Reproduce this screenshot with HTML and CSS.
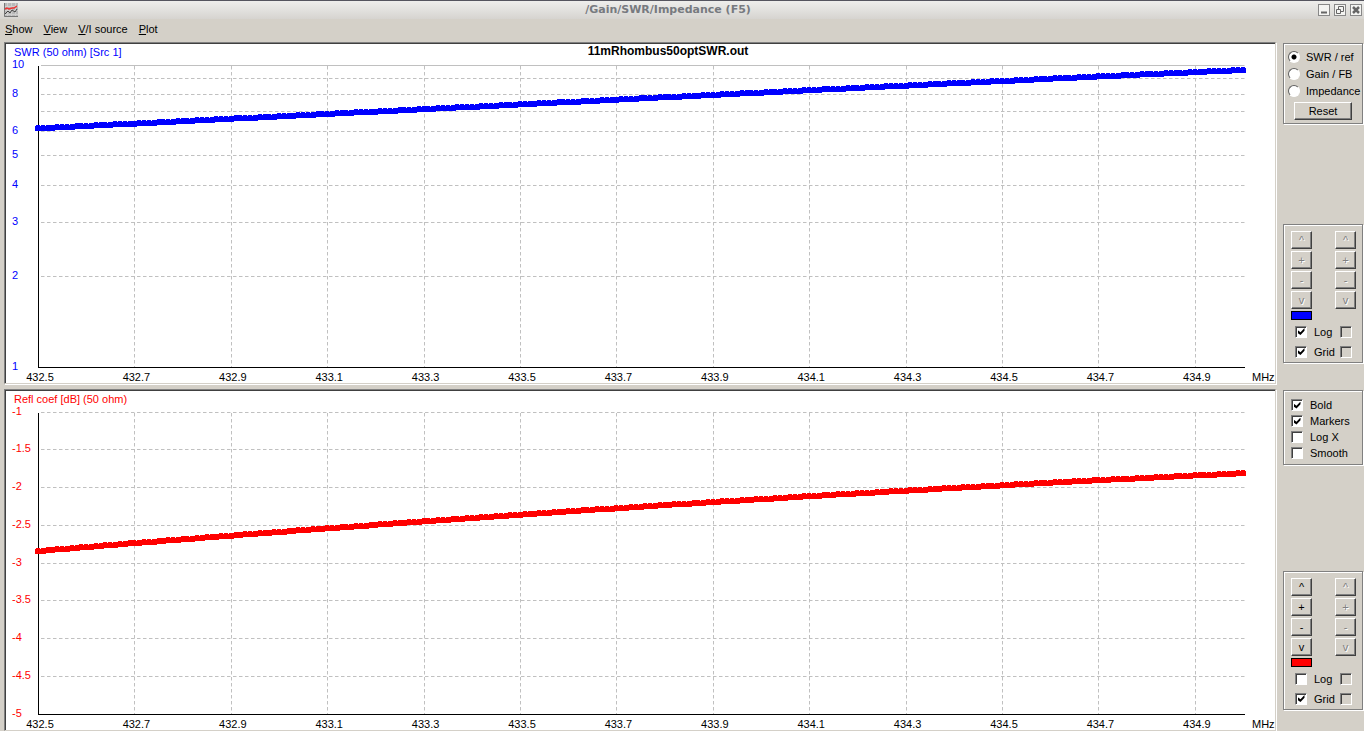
FILE: index.html
```html
<!DOCTYPE html>
<html lang="en">
<head>
<meta charset="utf-8">
<title>/Gain/SWR/Impedance (F5)</title>
<link rel="stylesheet" href="styles.css">
</head>
<body>
<header class="titlebar">
  <svg class="app-icon" width="14" height="14" viewBox="0 0 14 14" aria-hidden="true">
    <rect width="14" height="14" fill="#b9b9b9"/>
    <path d="M0 3.5h14M0 7.5h14M0 11.5h14M3.5 0v14M7.5 0v14M11.5 0v14" stroke="#cfcfcf"/>
    <path d="M.5 0v13.5H14" fill="none" stroke="#777"/>
    <path d="M1 6l2-1 2 1 3-1 2 0 3-2" fill="none" stroke="#e33" stroke-width="1.5"/>
    <path d="M1 11l3-3 2 2 2-3 3 2 2-3" fill="none" stroke="#444"/>
  </svg>
  <h1 class="window-title">/Gain/SWR/Impedance (F5)</h1>
  <div class="window-buttons">
    <button class="window-button" aria-label="Minimize"><svg width="10" height="10" viewBox="0 0 10 10"><path d="M2 7.5h6" stroke="#666" stroke-width="2"/></svg></button>
    <button class="window-button" aria-label="Restore"><svg width="10" height="10" viewBox="0 0 10 10" fill="none" stroke="#666"><path d="M3.500 4V1.500h5v5H6M1.500 4.500h4v4h-4z"/></svg></button>
    <button class="window-button" aria-label="Close"><svg width="10" height="10" viewBox="0 0 10 10"><path d="M2 2l6 6M8 2l-6 6" stroke="#666" stroke-width="2.500"/></svg></button>
  </div>
</header>
<nav class="menubar">
  <button class="menu"><u>S</u>how</button>
  <button class="menu"><u>V</u>iew</button>
  <button class="menu"><u>V</u>/I source</button>
  <button class="menu"><u>P</u>lot</button>
</nav>
<main class="workspace">
  <section class="row">
    <div class="chart-frame"><svg class="chart" id="swr" viewBox="0 0 1269 339" role="img" aria-label="SWR"></svg></div>
    <aside class="side">
      <div class="group modes">
        <label class="option"><input class="radio" type="radio" name="mode" checked>SWR / ref</label>
        <label class="option"><input class="radio" type="radio" name="mode">Gain / FB</label>
        <label class="option"><input class="radio" type="radio" name="mode">Impedance</label>
        <button class="button reset">Reset</button>
      </div>
      <div class="group scale">
        <div class="steppers">
          <div class="stepper">
            <button class="button step" disabled>^</button><button class="button step" disabled>+</button><button class="button step" disabled>-</button><button class="button step" disabled>v</button>
            <span class="swatch blue"></span>
          </div>
          <div class="stepper">
            <button class="button step" disabled>^</button><button class="button step" disabled>+</button><button class="button step" disabled>-</button><button class="button step" disabled>v</button>
          </div>
        </div>
        <div class="toggle"><label class="option"><input class="check" type="checkbox" checked>Log</label><input class="check" type="checkbox" aria-label="Log, right axis" disabled></div>
        <div class="toggle"><label class="option"><input class="check" type="checkbox" checked>Grid</label><input class="check" type="checkbox" aria-label="Grid, right axis" disabled></div>
      </div>
    </aside>
  </section>
  <section class="row">
    <div class="chart-frame"><svg class="chart" id="refl" viewBox="0 0 1269 339" role="img" aria-label="Reflection coefficient"></svg></div>
    <aside class="side">
      <div class="group display">
        <label class="option"><input class="check" type="checkbox" checked>Bold</label>
        <label class="option"><input class="check" type="checkbox" checked>Markers</label>
        <label class="option"><input class="check" type="checkbox">Log X</label>
        <label class="option"><input class="check" type="checkbox">Smooth</label>
      </div>
      <div class="group scale">
        <div class="steppers">
          <div class="stepper">
            <button class="button step">^</button><button class="button step">+</button><button class="button step">-</button><button class="button step">v</button>
            <span class="swatch red"></span>
          </div>
          <div class="stepper">
            <button class="button step" disabled>^</button><button class="button step" disabled>+</button><button class="button step" disabled>-</button><button class="button step" disabled>v</button>
          </div>
        </div>
        <div class="toggle"><label class="option"><input class="check" type="checkbox">Log</label><input class="check" type="checkbox" aria-label="Log, right axis" disabled></div>
        <div class="toggle"><label class="option"><input class="check" type="checkbox" checked>Grid</label><input class="check" type="checkbox" aria-label="Grid, right axis" disabled></div>
      </div>
    </aside>
  </section>
</main>
<script src="plot.js"></script>
</body>
</html>
```
FILE: styles.css
```css
* { box-sizing: border-box; }
body {
  margin: 0;
  min-height: 100vh;
  overflow: hidden;
  background: #d4d0c8;
  color: #000;
  font: 11px/16px "Liberation Sans", Arial, sans-serif;
}
button, input { margin: 0; padding: 0; font: inherit; color: inherit; }
.titlebar {
  display: flex;
  align-items: center;
  height: 19px;
  padding: 0 2px 0 4px;
  border-top: 1px solid #55555f;
  background: linear-gradient(#eeeeec, #d6d4d0);
}
.window-title {
  flex: 1;
  margin: 0;
  text-align: center;
  font: bold 11px/16px "DejaVu Sans", sans-serif;
  color: #777a80;
}
.window-buttons { display: flex; gap: 4px; }
.window-button {
  display: grid;
  place-items: center;
  width: 12px;
  height: 12px;
  border: 1px solid #888;
  background: #f4f4f2;
}
.menubar { display: flex; gap: 11px; height: 23px; padding: 2px 5px 5px; }
.menu { border: 0; background: none; }
.workspace { display: flex; flex-direction: column; gap: 5px; padding-left: 4px; }
.row { display: flex; gap: 7px; }
.chart-frame {
  flex: 1;
  min-width: 0;
  padding: 1px 0 0 1px;
  border: 1px solid;
  border-color: #808080 #d4d0c8 #d4d0c8 #808080;
  background: #fff;
  box-shadow: inset 1px 1px #404040, 1px 1px #fff;
}
.chart { display: block; width: 100%; height: auto; }
.chart text { font: 11px "Liberation Sans", Arial, sans-serif; }
.chart .heading { font-size: 12px; font-weight: bold; }
.side { display: flex; flex-direction: column; justify-content: space-between; width: 81px; padding: 1px 0 21px; }
.group {
  width: 80px;
  border: 1px solid #808080;
  box-shadow: inset 1px 1px #fff, 1px 1px #fff;
}
.option { display: flex; align-items: center; gap: 7px; white-space: nowrap; }
.modes { padding: 4px 0 3px 4px; }
.modes .option { gap: 6px; height: 17px; }
.check, .radio { appearance: none; flex: none; background: #fff; }
.check {
  display: grid;
  place-items: center;
  width: 12px;
  height: 12px;
  border: 1px solid;
  border-color: #808080 #fff #fff #808080;
  box-shadow: inset 1px 1px #404040;
}
.check:checked::before {
  content: "";
  width: 7px;
  height: 7px;
  background: #000;
  clip-path: polygon(0 29%, 43% 60%, 100% 0, 100% 40%, 43% 100%, 0 71%);
}
.check:disabled { background: #d4d0c8; }
.radio {
  width: 12px;
  height: 12px;
  border: 1px solid;
  border-color: #606060 #fff #fff #606060;
  border-radius: 50%;
}
.radio:checked { background: radial-gradient(circle, #000 2px, #fff 3px); }
.button {
  border: 1px solid;
  border-color: #fff #404040 #404040 #fff;
  background: #d4d0c8;
  box-shadow: inset -1px -1px #808080;
}
.reset { display: block; width: 58px; height: 18px; margin: 3px 0 0 6px; }
.scale { padding: 6px 6px 2px 7px; }
.steppers { display: flex; justify-content: space-between; }
.stepper { display: flex; flex-direction: column; gap: 2px; width: 21px; }
.step { height: 18px; line-height: 14px; }
.step:disabled { color: #808080; text-shadow: 1px 1px #fff; }
.swatch { height: 9px; border: 1px solid #000; }
.blue { background: #00f; }
.red { background: #f00; }
.toggle { display: flex; align-items: center; justify-content: space-between; height: 20px; padding: 3px 4px 0 4px; }
.display { padding: 6px 0 3px 7px; }
```
FILE: plot.js
```javascript
const NS = "http://www.w3.org/2000/svg";
const LEFT = 32.5, STEP = 96.4, WIDTH = 1206, TOP = 21.5, HEIGHT = 302;

function add(svg, tag, attrs, text) {
  const node = document.createElementNS(NS, tag);
  for (const key in attrs) node.setAttribute(key, attrs[key]);
  if (text !== undefined) node.textContent = text;
  svg.append(node);
}

const db = t => -2.84 + 1.315 * t - 0.285 * t * t;
const swr = t => { const g = 10 ** (db(t) / 20); return (1 + g) / (1 - g); };

function plot(svg, o) {
  const bottom = TOP + HEIGHT;
  for (let i = 1; i <= 12; i++) {
    const x = Math.floor(LEFT + i * STEP) + 0.5;
    add(svg, "path", { d: `M${x} ${TOP + 0.5}V${bottom}`, stroke: "#c0c0c0", "stroke-dasharray": "3.5 2.5" });
  }
  for (const v of o.grid) {
    const y = Math.floor(o.y(v)) + 0.5;
    add(svg, "path", { d: `M${LEFT + 2.5} ${y}H${LEFT + WIDTH}`, stroke: "#c0c0c0", "stroke-dasharray": o.solid === v ? "none" : "3.5 2.5" });
  }
  for (const v of o.labels) add(svg, "text", { x: 6, y: Math.floor(o.y(v)) + 3, fill: o.color }, v);
  add(svg, "path", { d: `M${LEFT} ${TOP}V${bottom}H${LEFT + WIDTH}`, fill: "none", stroke: "#000", "shape-rendering": "crispEdges" });
  for (let i = 0; i <= 12; i++) {
    add(svg, "text", { x: 34 + i * STEP, y: bottom + 13, "text-anchor": "middle" }, (432.5 + i * 0.2).toFixed(1));
  }
  add(svg, "text", { x: 1246, y: bottom + 13 }, "MHz");
  add(svg, "text", { x: 8, y: 12, fill: o.color }, o.title);
  let d = "";
  for (let i = 0; i <= 250; i++) {
    const x = Math.round(LEFT - 0.5 + (WIDTH - 1) * i / 250);
    const y = Math.round(o.y(o.value(i / 250)));
    d += `M${x - 3} ${y - 2}h6v5h-6zM${x - 2} ${y - 3}h4v6h-4z`;
  }
  add(svg, "path", { d, fill: o.color, "shape-rendering": "crispEdges" });
}

const swrChart = document.getElementById("swr");
plot(swrChart, {
  y: v => 323 - 302 * Math.log10(v), value: swr, color: "#0000ff",
  grid: [2, 3, 4, 5, 6, 7, 8, 9, 10], labels: [1, 2, 3, 4, 5, 6, 8, 10],
  solid: 10, title: "SWR (50 ohm) [Src 1]"
});
add(swrChart, "text", { x: 662, y: 11, "text-anchor": "middle", class: "heading" }, "11mRhombus50optSWR.out");
const levels = [-1, -1.5, -2, -2.5, -3, -3.5, -4, -4.5, -5];
plot(document.getElementById("refl"), {
  y: v => 21 + (-1 - v) * 75.5, value: db, color: "#ff0000",
  grid: levels.slice(0, -1), labels: levels, title: "Refl coef [dB] (50 ohm)"
});
```
